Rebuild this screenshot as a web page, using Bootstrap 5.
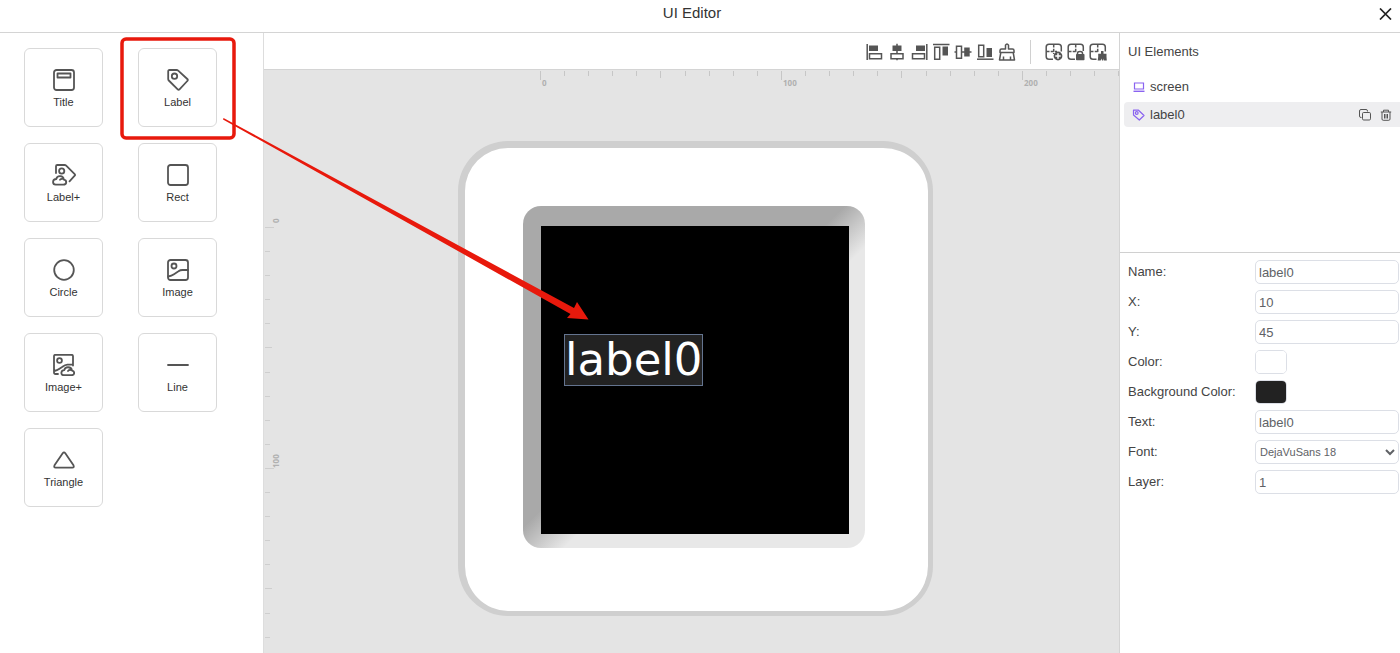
<!DOCTYPE html>
<html lang="en">
<head>
<meta charset="utf-8">
<meta name="viewport" content="width=device-width, initial-scale=1">
<title>UI Editor</title>
<link href="https://cdn.jsdelivr.net/npm/bootstrap@5.3.0/dist/css/bootstrap.min.css" rel="stylesheet">
<style>
  body { font-family: "Liberation Sans", Arial, sans-serif; font-size: 13px; line-height: 16px; color: #444; background: #fff; }
  svg { display: block; }
  .line-icon { fill: none; stroke: #555; stroke-width: 1.8; stroke-linejoin: round; stroke-linecap: round; }
  .icon-btn { padding: 0; border: 0; background: none; color: #555; }

  .editor-head { height: 33px; padding: 0 8px 6px; border-bottom: 1px solid #d4d4d4; }
  .editor-title { font-size: 15px; line-height: 20px; font-weight: 400; color: #333; }

  .palette { width: 264px; padding: 15px 24px; border-right: 1px solid #ddd; }
  .palette-grid { display: grid; grid-template-columns: 79px 79px; grid-auto-rows: 79px; column-gap: 35px; row-gap: 16px; }
  .tile { padding: 2px 0 0; gap: 4px; border: 1px solid #d9d9d9; border-radius: 6px; background: #fff; font-size: 11px; line-height: 14px; color: #333; }

  .toolbar { height: 36px; padding: 1px 12px 0; gap: 4px; }
  .tool-rule { width: 1px; height: 24px; margin: 0 10px; background: #d0d0d0; }
  .artboard { padding: 71px 0 0 194px; background: #e4e4e4; border-top: 1px solid #d4d4d4; }
  .ruler-label { font: bold 8px "Open Sans", sans-serif; fill: #b0b0b0; }
  .device { width: 475px; height: 475px; padding: 58px; background: #fff; border: solid #cfcfcf; border-width: 7px 5px 5px 7px; border-radius: 50px; }
  .bezel { width: 342px; height: 342px; padding: 20px 16px 14px 18px; border-radius: 18px; background: linear-gradient(135deg, #a9a9a9 47%, #e8e8e8 56%); }
  .lcd { width: 308px; height: 308px; background: #000; }
  .lcd-label { left: 23px; top: 108px; height: 52px; border: 1px solid #64748f; background: #222; color: #fff; font: 45px/50px "DejaVu Sans", sans-serif; }

  .inspector { width: 281px; border-left: 1px solid #d4d4d4; }
  .elements { height: 220px; padding: 11px 0 0 4px; border-bottom: 1px solid #d0d0d0; }
  .elements-title { padding: 0 4px; margin: 0 0 14px; font-size: 13px; line-height: 16px; font-weight: 400; }
  .element-row { height: 25px; margin-bottom: 3px; padding: 0 8px; gap: 5px; border-radius: 4px 0 0 4px; }
  .element-row.selected { background: #eeeef0; }
  .violet { stroke: #8a63f0; stroke-width: 1.2; }
  .props { padding: 7px 1px 0 8px; gap: 6px; }
  .prop { height: 24px; }
  .prop label { flex: 0 0 127px; }
  .field { height: 24px; min-width: 0; padding: 0 3px; border: 1px solid #dcdfe6; border-radius: 5px; background: #fff; color: #606266; font-size: 13px; line-height: 16px; }
  select.field { padding: 0; font-size: 11px; }
  .swatch { width: 32px; height: 24px; padding: 0; border: 1px solid #dcdfe6; border-radius: 5px; appearance: none; overflow: hidden; background: none; }
  .swatch::-webkit-color-swatch-wrapper { padding: 0; }
  .swatch::-webkit-color-swatch { border: 0; }
  .annotation { left: 0; top: 0; pointer-events: none; }
</style>
</head>
<body class="vh-100 d-flex flex-column overflow-hidden position-relative">

<header class="editor-head d-grid align-items-center flex-shrink-0 position-relative">
  <h1 class="editor-title text-center m-0 pe-3">UI Editor</h1>
  <button class="icon-btn position-absolute end-0 top-0 p-2" aria-label="Close">
    <svg width="13" height="12" viewBox="0 0 13 12" fill="none" stroke="#222" stroke-width="1.7"><path d="M1 .5 12 11.5M12 .5 1 11.5"/></svg>
  </button>
</header>

<main class="d-flex flex-grow-1">
  <aside class="palette flex-shrink-0">
    <div class="palette-grid">
      <button class="tile d-flex flex-column align-items-center justify-content-center">
        <svg class="line-icon" width="22" height="22" viewBox="0 0 22 22"><rect x="1" y="1" width="20" height="20" rx="2.5"/><rect x="4.5" y="4.5" width="13" height="4"/></svg>Title</button>
      <button class="tile d-flex flex-column align-items-center justify-content-center">
        <svg class="line-icon" width="22" height="22" viewBox="0 0 22 22"><path d="M2.500 1H9.500Q10.500 1 11.200 1.600L20.300 10Q21.300 11 20.300 12L12.500 20.300Q11.600 21.200 10.700 20.300L1.800 11.500Q1.200 10.900 1.200 10V2.500Q1.200 1 2.500 1Z"/><circle cx="7.500" cy="7.200" r="2.700"/></svg>Label</button>
      <button class="tile d-flex flex-column align-items-center justify-content-center">
        <svg class="line-icon" width="24" height="22" viewBox="0 0 24 22"><path d="M4 9V2.300Q4 1 5.300 1H12.500Q13.500 1 14.200 1.700L22.700 10.200Q23.400 11 22.700 11.700L17.500 17.300"/><circle cx="9.700" cy="7" r="2.600"/><path d="M3.700 20.700H11.300C15 20.700 15.200 16.200 11.800 15.700C11.500 11 5 11 4.300 15C.2 15.200 0 20.300 3.700 20.700ZM8 15.800Q9 14.500 11 15"/></svg>Label+</button>
      <button class="tile d-flex flex-column align-items-center justify-content-center">
        <svg class="line-icon" width="22" height="22" viewBox="0 0 22 22"><rect x="1" y="1" width="20" height="20" rx="2.500"/></svg>Rect</button>
      <button class="tile d-flex flex-column align-items-center justify-content-center">
        <svg class="line-icon" width="22" height="22" viewBox="0 0 22 22"><circle cx="11" cy="11" r="9.800"/></svg>Circle</button>
      <button class="tile d-flex flex-column align-items-center justify-content-center">
        <svg class="line-icon" width="22" height="22" viewBox="0 0 22 22"><rect x="1" y="1" width="20" height="20" rx="2.500"/><circle cx="7" cy="7" r="2.500"/><path d="M1.300 17.500Q4.500 17 7 15.200L11.500 12.200Q13.200 11 15.500 11H21"/></svg>Image</button>
      <button class="tile d-flex flex-column align-items-center justify-content-center">
        <svg class="line-icon" width="22" height="22" viewBox="0 0 22 22"><path d="M5 20H2.500Q1 20 1 18.500V2Q1 .800 2.500 .800H18.500Q20 .800 20 2.200V11.500M1.300 17Q4 16.500 6.500 14.800L9.500 12.800Q12 11 14.500 10.700L19.500 10.300"/><circle cx="6.500" cy="6.500" r="2.400"/><path d="M10.500 21.200H18.500C22 21.200 22 17 19 16.600C18.300 12.200 12 12.200 11.300 16.200C7.600 16.300 7.500 21 10.500 21.200ZM15 17Q16 15.600 18 16"/></svg>Image+</button>
      <button class="tile d-flex flex-column align-items-center justify-content-center">
        <svg class="line-icon" width="22" height="22" viewBox="0 0 22 22"><path d="M1 11H21"/></svg>Line</button>
      <button class="tile d-flex flex-column align-items-center justify-content-center">
        <svg class="line-icon" width="22" height="22" viewBox="0 0 22 22"><path d="M9.700 4.300Q11 2.500 12.300 4.300L20.500 16.300Q21.500 18.700 19.300 18.700H2.700Q.500 18.700 1.500 16.300Z"/></svg>Triangle</button>
    </div>
  </aside>

  <section class="d-flex flex-column flex-grow-1 overflow-hidden">
    <div class="toolbar d-flex align-items-center justify-content-end flex-shrink-0">
      <button class="icon-btn" aria-label="Align left"><svg width="18" height="18" viewBox="0 0 18 18" fill="none" stroke="currentColor" stroke-width="1.500"><path d="M1.200 1V17"/><path fill="currentColor" stroke="none" d="M3 2.500h9v5.500h-9z"/><path d="M3.500 10.700h12v5h-12z"/></svg></button>
      <button class="icon-btn" aria-label="Align center"><svg width="18" height="18" viewBox="0 0 18 18" fill="none" stroke="currentColor" stroke-width="1.500"><path d="M9 .800V10.500M9 15.500V17.200"/><path fill="currentColor" stroke="none" d="M4.500 2.500h9v5.500h-9z"/><path d="M3 10.700h12v5h-12z"/></svg></button>
      <button class="icon-btn" aria-label="Align right"><svg width="18" height="18" viewBox="0 0 18 18" fill="none" stroke="currentColor" stroke-width="1.500"><path d="M16.800 1V17"/><path fill="currentColor" stroke="none" d="M6 2.500h9v5.500h-9z"/><path d="M2.500 10.700h12v5h-12z"/></svg></button>
      <button class="icon-btn" aria-label="Align top"><svg width="18" height="18" viewBox="0 0 18 18" fill="none" stroke="currentColor" stroke-width="1.500"><path d="M1 1.500H17.500"/><path fill="currentColor" stroke="none" d="M10.500 3.500h5.500v9h-5.500z"/><path d="M2.700 4.200h5v12h-5z"/></svg></button>
      <button class="icon-btn" aria-label="Align middle"><svg width="18" height="18" viewBox="0 0 18 18" fill="none" stroke="currentColor" stroke-width="1.500"><path d="M.500 9H2.500M7.500 9H17.500"/><path fill="currentColor" stroke="none" d="M10.200 4.500h5.500v9h-5.500z"/><path d="M2.500 3.200h5v12h-5z"/></svg></button>
      <button class="icon-btn" aria-label="Align bottom"><svg width="18" height="18" viewBox="0 0 18 18" fill="none" stroke="currentColor" stroke-width="1.500"><path d="M1 16.200H17.500"/><path fill="currentColor" stroke="none" d="M10.500 5h5.500v9h-5.500z"/><path d="M2.700 2.200h5v11.500h-5z"/></svg></button>
      <button class="icon-btn" aria-label="Clear"><svg width="18" height="18" viewBox="0 0 18 18" fill="none" stroke="currentColor" stroke-width="1.500" stroke-linejoin="round"><path d="M7.500 6V2.200Q9 -.300 10.500 2.200V6H14.500Q16 6 16 7.500V9.500H2V7.500Q2 6 3.500 6ZM2.800 9.500 1.500 17H16.500L15.200 9.500M5.500 17V13.500M12.500 17V13.500"/></svg></button>
      <span class="tool-rule"></span>
      <button class="icon-btn" aria-label="Add grid"><svg width="18" height="18" viewBox="0 0 18 18" fill="none" stroke="currentColor" stroke-width="1.500"><path d="M8 16.300H4Q1.200 16.300 1.200 13.500V4Q1.200 1.200 4 1.200H13.500Q16.300 1.200 16.300 4V8.500"/><path stroke-dasharray="3 1.200" d="M1.500 8.500H12M8.700 1.500V11"/><circle cx="13" cy="13" r="4.400" fill="currentColor" stroke="none"/><path stroke="#fff" d="M10.300 13H15.700M13 10.300V15.700"/></svg></button>
      <button class="icon-btn" aria-label="Lock grid"><svg width="18" height="18" viewBox="0 0 18 18" fill="none" stroke="currentColor" stroke-width="1.500"><path d="M8 16.300H4Q1.200 16.300 1.200 13.500V4Q1.200 1.200 4 1.200H13.500Q16.300 1.200 16.300 4V8"/><path stroke-dasharray="3 1.200" d="M1.500 8.500H10M8.700 1.500V10"/><path d="M10.500 12V10.300Q10.500 8.600 13 8.600T15.500 10.300V12"/><rect x="9" y="11" width="8.500" height="6.300" rx=".8" fill="currentColor" stroke="none"/></svg></button>
      <button class="icon-btn" aria-label="Clear grid"><svg width="18" height="18" viewBox="0 0 18 18" fill="none" stroke="currentColor" stroke-width="1.500"><path d="M7.500 16.300H4Q1.200 16.300 1.200 13.500V4Q1.200 1.200 4 1.200H13.500Q16.300 1.200 16.300 4V8.500"/><path stroke-dasharray="3 1.200" d="M1.500 8.500H10M8.700 1.500V10"/><path fill="currentColor" stroke="none" d="M12 8h2.500v2.700h3v3l.3 3.800h-3v-2l-.8 2h-1l-.5-2-.8 2h-3l.5-3.800v-3h2.800z"/></svg></button>
    </div>

    <div class="artboard flex-grow-1 position-relative overflow-hidden">
      <svg class="position-absolute top-0 start-0 w-100 h-100" aria-hidden="true">
        <defs>
          <pattern id="ticks-x" x="276" y="1" width="241" height="10" patternUnits="userSpaceOnUse"><path stroke="#c6c6c6" d="M.5 0V9M24.500 0V5M48.500 0V5M72.500 0V5M96.500 0V5M120.500 0V7M145.500 0V5M169.500 0V5M193.500 0V5M217.500 0V5"/></pattern>
          <pattern id="ticks-y" x="1" y="157" width="10" height="241" patternUnits="userSpaceOnUse"><path stroke="#cecece" d="M0 .5H9M0 24.500H5M0 48.500H5M0 72.500H5M0 96.500H5M0 120.500H7M0 145.500H5M0 169.500H5M0 193.500H5M0 217.500H5"/></pattern>
        </defs>
        <rect x="276" y="1" width="100%" height="9" fill="url(#ticks-x)"/>
        <rect x="1" y="157" width="9" height="100%" fill="url(#ticks-y)"/>
        <g class="ruler-label">
          <text x="278" y="16">0</text><text x="519" y="16">100</text><text x="760" y="16">200</text>
          <text transform="translate(15 153) rotate(-90)">0</text><text transform="translate(15 398) rotate(-90)">100</text>
        </g>
      </svg>
      <div class="device position-relative">
        <div class="bezel">
          <div class="lcd position-relative"><div class="lcd-label position-absolute">label0</div></div>
        </div>
      </div>
    </div>
  </section>

  <aside class="inspector flex-shrink-0">
    <div class="elements">
      <h2 class="elements-title">UI Elements</h2>
      <div class="element-row d-flex align-items-center">
        <svg class="violet" width="13" height="12" viewBox="0 0 13 12" fill="none"><path d="M2.500 2H11.500V8H2.500Z"/><path d="M1.500 10.300H12.500" stroke-width="1.400"/></svg>
        <span>screen</span>
      </div>
      <div class="element-row selected d-flex align-items-center">
        <svg class="violet" width="13" height="12" viewBox="0 0 13 12" fill="none" stroke-linejoin="round"><path d="M1.500 1.200H6.500L12 6.500 7.300 11 1.500 6Z"/><circle cx="4.700" cy="4" r="1.400"/></svg>
        <span class="me-auto">label0</span>
        <button class="icon-btn me-1" aria-label="Duplicate"><svg width="12" height="12" viewBox="0 0 12 12" fill="none" stroke="currentColor"><path d="M2.500 8.500H2Q.500 8.500 .500 7V2Q.500 .500 2 .500H7Q8.500 .500 8.500 2V2.500"/><rect x="3.500" y="3.500" width="8" height="7.500" rx="1.200"/></svg></button>
        <button class="icon-btn" aria-label="Delete"><svg width="12" height="12" viewBox="0 0 12 12" fill="none" stroke="currentColor"><path d="M.800 3H11.200M3.500 3V1.200H8.500V3M2 3V10Q2 11.300 3.200 11.300H8.800Q10 11.300 10 10V3M4.500 5V9.500M6 5V9.500M7.500 5V9.500"/></svg></button>
      </div>
    </div>
    <form class="props d-flex flex-column">
      <div class="prop d-flex align-items-center"><label for="p-name">Name:</label><input class="field flex-grow-1" id="p-name" value="label0"></div>
      <div class="prop d-flex align-items-center"><label for="p-x">X:</label><input class="field flex-grow-1" id="p-x" value="10"></div>
      <div class="prop d-flex align-items-center"><label for="p-y">Y:</label><input class="field flex-grow-1" id="p-y" value="45"></div>
      <div class="prop d-flex align-items-center"><label for="p-color">Color:</label><input class="swatch" type="color" id="p-color" value="#ffffff"></div>
      <div class="prop d-flex align-items-center"><label for="p-bg">Background Color:</label><input class="swatch" type="color" id="p-bg" value="#222222"></div>
      <div class="prop d-flex align-items-center"><label for="p-text">Text:</label><input class="field flex-grow-1" id="p-text" value="label0"></div>
      <div class="prop d-flex align-items-center"><label for="p-font">Font:</label><select class="field flex-grow-1" id="p-font"><option>DejaVuSans 18</option></select></div>
      <div class="prop d-flex align-items-center"><label for="p-layer">Layer:</label><input class="field flex-grow-1" id="p-layer" value="1"></div>
    </form>
  </aside>
</main>

<svg class="annotation position-absolute w-100 h-100" aria-hidden="true">
  <rect x="122" y="39" width="112" height="99" rx="4" fill="none" stroke="#e8190c" stroke-width="3.500"/>
  <path fill="#e8190c" d="M223.500 118 574 308 577 302 588.500 319.500 567 318 570.500 314 223 119.500Z"/>
</svg>

<script src="https://cdn.jsdelivr.net/npm/bootstrap@5.3.0/dist/js/bootstrap.bundle.min.js"></script>
</body>
</html>
